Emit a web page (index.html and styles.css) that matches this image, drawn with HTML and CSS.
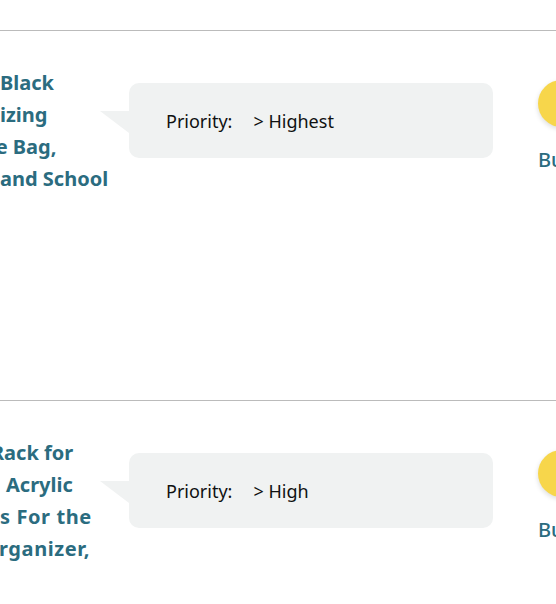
FILE: index.html
```html
<!DOCTYPE html>
<html>
<head>
<meta charset="utf-8">
<link rel="stylesheet" href="styles.css">
</head>
<body>
<div class="list">
  <div class="item item-prev"></div>
  <div class="item">
    <div class="title">
      <span class="line l-black">Black</span>
      <span class="line l-izing">nizing</span>
      <span class="line l-bag">te Bag,</span>
      <span class="line">and School</span>
    </div>
    <div class="bubble-wrap">
      <div class="tail"></div>
      <div class="bubble"><span class="label">Priority:</span><span class="value">&gt; Highest</span></div>
    </div>
    <div class="action">
      <div class="circle"></div>
      <div class="action-text">Buy</div>
    </div>
  </div>
  <div class="item">
    <div class="title">
      <span class="line l-rack">Rack for</span>
      <span class="line l-acrylic">Acrylic</span>
      <span class="line l-for">s For the</span>
      <span class="line l-org">rganizer,</span>
    </div>
    <div class="bubble-wrap">
      <div class="tail"></div>
      <div class="bubble"><span class="label">Priority:</span><span class="value">&gt; High</span></div>
    </div>
    <div class="action">
      <div class="circle"></div>
      <div class="action-text">Buy</div>
    </div>
  </div>
</div>
</body>
</html>
```
FILE: styles.css
```css
html, body {
  margin: 0;
  padding: 0;
  background: #ffffff;
  overflow: hidden;
}
body {
  font-family: "Noto Sans", "DejaVu Sans", sans-serif;
  color: #0f1111;
}
.list {
  display: flex;
  flex-direction: column;
}
.item {
  display: flex;
  height: 369px;
  border-top: 1px solid #bbbbbb;
}
.item-prev {
  height: 30px;
  border-top: none;
}
.title {
  width: 100px;
  flex: none;
  margin-top: 36px;
  display: flex;
  flex-direction: column;
  font-size: 20px;
  font-weight: 700;
  line-height: 32px;
  color: #2b6c7f;
  white-space: nowrap;
}
.l-black { margin-left: 0; }
.l-izing { margin-left: -13px; }
.l-bag { margin-left: -13px; }
.l-rack { margin-left: -9px; }
.l-acrylic { margin-left: 6px; }
.l-for { margin-left: 0; letter-spacing: 0.6px; }
.l-org { margin-left: -1px; letter-spacing: 0.6px; }
.bubble-wrap {
  display: flex;
  align-items: flex-start;
  margin-top: 52px;
  flex: none;
}
.tail {
  width: 0;
  height: 0;
  margin-top: 28px;
  border-top: 22px solid #f0f2f2;
  border-left: 29px solid transparent;
}
.bubble {
  width: 327px;
  height: 75px;
  padding-left: 37px;
  background: #f0f2f2;
  border-radius: 10px;
  display: flex;
  align-items: center;
  font-size: 18px;
}
.label { margin-right: 21px; }
.action {
  margin-left: 45px;
  margin-top: 49px;
  display: flex;
  flex-direction: column;
  flex: none;
}
.circle {
  width: 47px;
  height: 47px;
  border-radius: 50%;
  background: #f7d64b;
  box-shadow: 0 2px 5px rgba(15, 17, 17, 0.15);
}
.action-text {
  margin-top: 20px;
  font-size: 20px;
  line-height: 26px;
  font-weight: 500;
  color: #2b6c7f;
}
```
